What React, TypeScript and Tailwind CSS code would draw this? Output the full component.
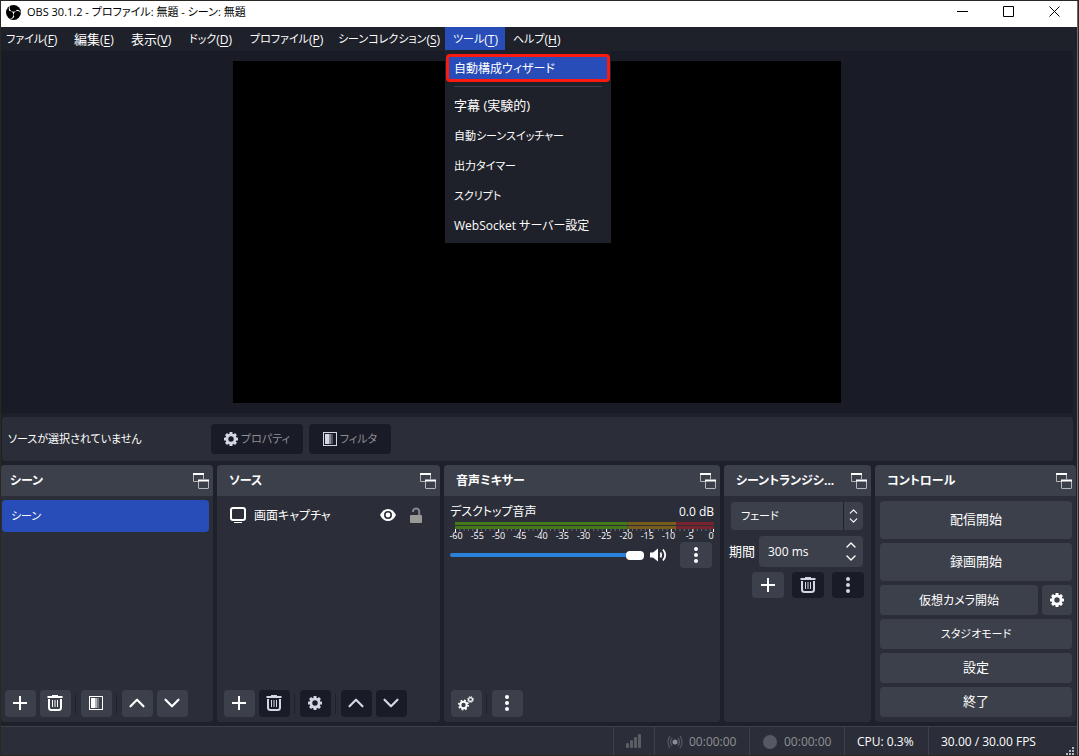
import { ReactNode, useState } from 'react';
import { ChevronDown, ChevronUp } from 'lucide-react';
import { SiObsstudio } from 'react-icons/si';

const MENUS = [
  { label: 'ファイル', accessKey: 'F', width: 'w-[65px]', size: 'text-[11px]' },
  { label: '編集', accessKey: 'E', width: 'w-[57px]', size: 'text-[13px]' },
  { label: '表示', accessKey: 'V', width: 'w-[58px]', size: 'text-[13px]' },
  { label: 'ドック', accessKey: 'D', width: 'w-[61px]', size: 'text-[11px]' },
  { label: 'プロファイル', accessKey: 'P', width: 'w-[88px]', size: 'text-[11px]' },
  { label: 'シーンコレクション', accessKey: 'S', width: 'w-[115px]', size: 'text-[11px]' },
  { label: 'ツール', accessKey: 'T', width: 'w-[60px]', size: 'text-[11px]' },
  { label: 'ヘルプ', accessKey: 'H', width: 'w-[66px]', size: 'text-[11px]' },
];

const TOOL_ITEMS = [
  { label: '字幕 (実験的)', size: 'text-[13px]' },
  { label: '自動シーンスイッチャー', size: 'text-[11px]' },
  { label: '出力タイマー', size: 'text-[11px]' },
  { label: 'スクリプト', size: 'text-[11px]' },
  { label: 'WebSocket サーバー設定', size: 'text-[12px]' },
];

const METER_LABELS = [-60, -55, -50, -45, -40, -35, -30, -25, -20, -15, -10, -5, 0];

/* ---------- icons ---------- */

const ObsLogo = () => (
  <span className="flex size-[15px] shrink-0 items-center justify-center overflow-hidden rounded-full bg-black text-white">
    <SiObsstudio size={19} className="shrink-0" aria-hidden="true" />
  </span>
);

const GearIcon = ({ size = 14, className = '' }: { size?: number; className?: string }) => (
  <svg width={size} height={size} viewBox="0 0 14 14" className={className} aria-hidden="true">
    <circle cx="7" cy="7" r="4.100" fill="none" stroke="currentColor" strokeWidth="2.800" />
    {[0, 45, 90, 135, 180, 225, 270, 315].map((deg) => (
      <rect key={deg} x="5.500" y="0" width="3" height="3" rx="0.500" fill="currentColor" transform={`rotate(${deg} 7 7)`} />
    ))}
  </svg>
);

const GearsIcon = () => (
  <svg width="16" height="15" viewBox="0 0 16 15" aria-hidden="true">
    <g fill="none" stroke="currentColor">
      <circle cx="5.500" cy="9" r="3.200" strokeWidth="2" />
      <circle cx="5.500" cy="9" r="4.700" strokeWidth="1.600" strokeDasharray="1.850 1.840" />
      <circle cx="12.500" cy="3.500" r="1.900" strokeWidth="1.200" />
      <circle cx="12.500" cy="3.500" r="2.900" strokeWidth="1" strokeDasharray="1.140 1.140" />
    </g>
  </svg>
);

const PlusIcon = () => (
  <svg width="14" height="14" viewBox="0 0 14 14" aria-hidden="true">
    <path d="M7 0V14M0 7H14" stroke="#fff" strokeWidth="2" />
  </svg>
);

const TrashIcon = () => (
  <svg width="16" height="16" viewBox="0 0 16 16" fill="none" stroke="currentColor" aria-hidden="true">
    <path d="M0.500 2H15.500" strokeWidth="2" />
    <path d="M5 0.500H11" strokeWidth="1" />
    <path d="M2 4V12.500Q2 15 4.500 15H11.500Q14 15 14 12.500V4" strokeWidth="2" />
    <path d="M5.500 5V12M8 5V12M10.500 5V12" strokeWidth="1" />
  </svg>
);

const FilterIcon = () => (
  <svg width="14" height="14" viewBox="0 0 14 14" aria-hidden="true">
    <rect x="0.500" y="0.500" width="13" height="13" fill="none" stroke="currentColor" />
    <rect x="2" y="2" width="4" height="10" fill="currentColor" />
    <rect x="6" y="2" width="2" height="10" fill="currentColor" opacity="0.600" />
    <rect x="8" y="2" width="2" height="10" fill="currentColor" opacity="0.300" />
  </svg>
);

const DotsIcon = () => (
  <svg width="4" height="16" viewBox="0 0 4 16" fill="currentColor" aria-hidden="true">
    <circle cx="2" cy="2" r="2" />
    <circle cx="2" cy="8" r="2" />
    <circle cx="2" cy="14" r="2" />
  </svg>
);

const PopoutIcon = () => (
  <svg width="16" height="16" viewBox="0 0 16 16" fill="none" aria-hidden="true">
    <path d="M5 8.500H0.500V1H10.500V6" stroke="#b4b6bc" />
    <path d="M0 1H11" stroke="#fff" strokeWidth="2" />
    <rect x="5.500" y="7.500" width="10" height="8" rx="0.500" stroke="#b4b6bc" />
    <path d="M5 7.500H16" stroke="#fff" strokeWidth="2" />
  </svg>
);

const MonitorIcon = () => (
  <svg width="16" height="16" viewBox="0 0 16 16" fill="none" stroke="#fff" aria-hidden="true">
    <rect x="1" y="1" width="14" height="12" rx="2" strokeWidth="2" />
    <path d="M4 15.500H12" strokeWidth="1" />
  </svg>
);

const EyeIcon = () => (
  <svg width="16" height="12" viewBox="0 0 16 12" aria-hidden="true">
    <path d="M0 6Q3 0 8 0T16 6Q13 12 8 12T0 6Z" fill="#fff" />
    <circle cx="8" cy="6" r="3.200" fill="none" stroke="#2b2e38" strokeWidth="1.600" />
  </svg>
);

const UnlockIcon = () => (
  <svg width="12" height="16" viewBox="0 0 12 16" aria-hidden="true">
    <rect y="8" width="12" height="8" rx="1" fill="#9a9995" />
    <path d="M3 5V4A3.200 3.200 0 0 1 9.200 4V8" fill="none" stroke="#85858a" strokeWidth="2" />
  </svg>
);

const SpeakerIcon = () => (
  <svg width="18" height="14" viewBox="0 0 18 14" fill="none" stroke="#fff" aria-hidden="true">
    <path d="M0 4.500H3L8 0.500V13.500L3 9.500H0Z" fill="#fff" stroke="none" />
    <path d="M10.500 4.500Q12 7 10.500 9.500" strokeWidth="1.800" />
    <path d="M13 1.500Q17.500 7 13 12.500" strokeWidth="1.800" />
  </svg>
);

/* ---------- small parts ---------- */

interface ToolButtonProps {
  label: string;
  dark?: boolean;
  wide?: boolean;
  children: ReactNode;
}

const ToolButton = ({ label, dark, wide, children }: ToolButtonProps) => (
  <button
    type="button"
    aria-label={label}
    className={`flex items-center justify-center rounded ${wide ? 'h-[26px] w-8' : 'h-[27px] w-[31px] pr-px pb-px'} ${
      dark ? 'bg-[#191b26] text-[#d3d6e4]' : 'bg-[#3c404b] text-white'
    }`}
  >
    {children}
  </button>
);

const Divider = () => <span className="mr-px h-5 w-px bg-[#1f212a]" />;

const Toolbar = ({ children }: { children: ReactNode }) => (
  <div className="mt-auto flex items-center gap-1 pb-[5px]">{children}</div>
);

interface DockProps {
  title: string;
  flush?: boolean;
  children: ReactNode;
}

const Dock = ({ title, flush, children }: DockProps) => (
  <section className="flex min-w-0 flex-col overflow-hidden rounded bg-[#2b2e38]">
    <header className={`flex h-[31px] shrink-0 items-center justify-between bg-[#3c404b] pr-1 ${flush ? 'pl-[9px]' : 'pl-3'}`}>
      <h2 className="pt-px text-[12px] font-bold whitespace-nowrap">{title}</h2>
      <button type="button" aria-label={`${title} 切り離し`} className="shrink-0">
        <PopoutIcon />
      </button>
    </header>
    {children}
  </section>
);

/* ---------- window sections ---------- */

const TitleBar = () => (
  <header className="flex h-[26px] shrink-0 items-center bg-white pl-[5px] text-[11px] text-black">
    <div className="pb-1"><ObsLogo /></div>
    <h1 className="ml-[6px] flex-1 pb-[3px]">OBS 30.1.2 - プロファイル: 無題 - シーン: 無題</h1>
    <div className="flex h-full pb-[5px]">
      <button type="button" aria-label="最小化" className="flex w-[46px] items-center justify-center">
        <svg width="11" height="11" viewBox="0 0 11 11"><path d="M0 5.500H11" stroke="#000" /></svg>
      </button>
      <button type="button" aria-label="最大化" className="flex w-[46px] items-center justify-center">
        <svg width="11" height="11" viewBox="0 0 11 11"><path d="M.5.500H10.500V10.500H.5Z" fill="none" stroke="#000" /></svg>
      </button>
      <button type="button" aria-label="閉じる" className="flex w-[46px] items-center justify-center">
        <svg width="11" height="11" viewBox="0 0 11 11"><path d="M.5.500L10.500 10.500M10.500.500L.5 10.500" stroke="#000" /></svg>
      </button>
    </div>
  </header>
);

const ToolsMenu = () => (
  <div className="absolute top-6 left-0 z-10 w-[166px] bg-[#1f212a] px-px pt-[3px] pb-[3px]">
    <button
      type="button"
      className="flex h-7 w-full items-center rounded border-3 border-[#fb1a10] bg-[#284cb8] pt-px pl-[5px] text-[12px]"
    >
      自動構成ウィザード
    </button>
    <hr className="mx-2 mt-1 mb-[3px] border-[#3c404b]" />
    {TOOL_ITEMS.map(({ label, size }) => (
      <button key={label} type="button" className={`flex h-[30px] w-full items-center pt-[2px] pl-2 whitespace-nowrap ${size}`}>
        {label}
      </button>
    ))}
  </div>
);

const MenuBar = () => (
  <nav className="flex h-6 shrink-0">
    {MENUS.map(({ label, accessKey, width, size }, i) => (
      <div key={label} className={`relative ${width}`}>
        <button
          type="button"
          className={`flex h-[23px] w-full items-center pt-[2px] text-[12px] whitespace-nowrap ${i === 0 ? 'pl-[5px]' : 'pl-2'} ${
            accessKey === 'T' ? 'bg-[#284cb8]' : ''
          }`}
        >
          <span className={size}>{label}</span>
          <span>(<u className="underline-offset-2">{accessKey}</u>)</span>
        </button>
        {accessKey === 'T' && <ToolsMenu />}
      </div>
    ))}
  </nav>
);

const ContextBar = () => (
  <div className="mt-1 mr-1 ml-px flex h-11 shrink-0 items-center rounded bg-[#2b2e38] pl-[6px] text-[11px]">
    <span className="w-[203px] pt-px">ソースが選択されていません</span>
    <button type="button" className="flex h-[30px] w-[92px] items-center justify-center gap-[3px] rounded bg-[#191b26] text-[#8f8f93]">
      <GearIcon className="text-[#d3d6e4]" />
      プロパティ
    </button>
    <button type="button" className="ml-[6px] flex h-[30px] w-[82px] items-center justify-center gap-[3px] rounded bg-[#191b26] text-[#8f8f93]">
      <span className="text-[#d3d6e4]"><FilterIcon /></span>
      フィルタ
    </button>
  </div>
);

const ScenesDock = () => (
  <Dock title="シーン" flush>
    <button type="button" className="mt-1 mr-1 ml-px flex h-8 items-center rounded bg-[#284cb8] pt-px pl-[9px] text-[11px]">
      シーン
    </button>
    <div className="mt-auto pl-1">
      <Toolbar>
        <ToolButton label="シーンを追加"><PlusIcon /></ToolButton>
        <ToolButton label="シーンを削除"><TrashIcon /></ToolButton>
        <Divider />
        <ToolButton label="シーンフィルタ"><FilterIcon /></ToolButton>
        <Divider />
        <ToolButton label="上へ移動"><ChevronUp size={26} /></ToolButton>
        <ToolButton label="下へ移動"><ChevronDown size={26} /></ToolButton>
      </Toolbar>
    </div>
  </Dock>
);

const SourcesDock = () => (
  <Dock title="ソース">
    <div className="mt-[3px] flex h-8 items-center pr-[18px] pl-[13px] text-[12px]">
      <MonitorIcon />
      <span className="ml-2 flex-1 truncate pt-px">画面キャプチャ</span>
      <button type="button" aria-label="表示" className="mr-[14px]"><EyeIcon /></button>
      <button type="button" aria-label="ロック"><UnlockIcon /></button>
    </div>
    <div className="mt-auto pl-[7px]">
      <Toolbar>
        <ToolButton label="ソースを追加"><PlusIcon /></ToolButton>
        <ToolButton label="ソースを削除" dark><TrashIcon /></ToolButton>
        <Divider />
        <ToolButton label="ソースのプロパティ" dark><GearIcon /></ToolButton>
        <Divider />
        <ToolButton label="上へ移動" dark><ChevronUp size={26} /></ToolButton>
        <ToolButton label="下へ移動" dark><ChevronDown size={26} /></ToolButton>
      </Toolbar>
    </div>
  </Dock>
);

const LevelMeter = () => (
  <svg className="block h-[10px] w-full" viewBox="0 0 60 10" preserveAspectRatio="none" aria-hidden="true">
    {[0, 4].map((y) => (
      <g key={y}>
        <rect x="0" y={y} width="40" height="3" fill="#447818" />
        <rect x="40" y={y} width="11.200" height="3" fill="#785c1c" />
        <rect x="51.200" y={y} width="8.800" height="3" fill="#78242f" />
      </g>
    ))}
    {Array.from({ length: 61 }, (_, db) => (
      <rect
        key={db}
        x={db === 60 ? 59.77 : db}
        y="7"
        width="0.230"
        height={db % 5 === 0 ? 3 : 2}
        fill={db % 5 === 0 ? '#fff' : '#6d6f78'}
      />
    ))}
  </svg>
);

const MixerDock = () => {
  const [volume, setVolume] = useState(100);

  return (
    <Dock title="音声ミキサー">
      <div className="mt-[6px] flex h-5 items-center justify-between px-[6px] text-[12px]">
        <label htmlFor="desktop-volume">デスクトップ音声</label>
        <span>0.0 dB</span>
      </div>
      <div className="pr-[6px] pl-[11px]">
        <LevelMeter />
      </div>
      <div className="mr-px ml-1 flex h-2 items-center justify-between font-['Open_Sans'] text-[9px]">
        {METER_LABELS.map((db) => (
          <span key={db} className="w-4 text-center whitespace-nowrap">{db}</span>
        ))}
      </div>
      <div className="mt-[2px] flex items-center pr-2 pl-[6px]">
        <input
          id="desktop-volume"
          type="range"
          min={0}
          max={100}
          value={volume}
          onChange={(e) => setVolume(Number(e.target.value))}
          className="h-1 min-w-0 flex-1 appearance-none rounded-full bg-[#2a82da] [&::-webkit-slider-thumb]:h-[9px] [&::-webkit-slider-thumb]:w-[18px] [&::-webkit-slider-thumb]:appearance-none [&::-webkit-slider-thumb]:rounded-sm [&::-webkit-slider-thumb]:bg-white"
        />
        <button type="button" aria-label="ミュート" className="mr-3 ml-[6px]"><SpeakerIcon /></button>
        <ToolButton label="デスクトップ音声のメニュー" wide><DotsIcon /></ToolButton>
      </div>
      <div className="mt-auto pl-[7px]">
        <Toolbar>
          <ToolButton label="オーディオの詳細プロパティ"><GearsIcon /></ToolButton>
          <Divider />
          <ToolButton label="ミキサーメニュー"><DotsIcon /></ToolButton>
        </Toolbar>
      </div>
    </Dock>
  );
};

const TransitionsDock = () => {
  const [duration, setDuration] = useState('300 ms');

  return (
    <Dock title="シーントランジシ...">
      <div className="mt-[6px] mr-2 ml-[7px] flex h-7 rounded bg-[#3c404b] text-[11px]">
        <select aria-label="トランジション" className="min-w-0 flex-1 appearance-none pt-px pl-[10px] outline-none">
          <option>フェード</option>
        </select>
        <span className="pointer-events-none flex w-5 flex-col items-center justify-center border-l border-[#1f212a]">
          <span className="flex h-[9px] items-center"><ChevronUp size={13} /></span>
          <span className="flex h-[9px] items-center"><ChevronDown size={13} /></span>
        </span>
      </div>
      <div className="mt-[6px] mr-2 ml-[5px] flex items-center text-[12px]">
        <label htmlFor="duration" className="w-[30px] shrink-0 text-[13px]">期間</label>
        <div className="flex h-[31px] min-w-0 flex-1 rounded bg-[#3c404b]">
          <input
            id="duration"
            value={duration}
            onChange={(e) => setDuration(e.target.value)}
            className="min-w-0 flex-1 pl-[9px] outline-none"
          />
          <div className="flex w-6 flex-col items-center justify-center">
            <button type="button" aria-label="増やす" className="flex h-[13px] items-center"><ChevronUp size={16} /></button>
            <button type="button" aria-label="減らす" className="flex h-[13px] items-center"><ChevronDown size={16} /></button>
          </div>
        </div>
      </div>
      <div className="mt-[5px] mr-[7px] flex justify-end gap-2">
        <ToolButton label="トランジションを追加" wide><PlusIcon /></ToolButton>
        <ToolButton label="トランジションを削除" dark wide><TrashIcon /></ToolButton>
        <ToolButton label="トランジションのメニュー" dark wide><DotsIcon /></ToolButton>
      </div>
    </Dock>
  );
};

const ControlsDock = () => (
  <Dock title="コントロール">
    <div className="flex flex-col gap-1 pt-[5px] pr-1 pl-[5px] text-[13px]">
      <button type="button" className="h-[38px] rounded bg-[#3c404b]">配信開始</button>
      <button type="button" className="h-[38px] rounded bg-[#3c404b]">録画開始</button>
      <div className="flex gap-1">
        <button type="button" className="h-[30px] flex-1 rounded bg-[#3c404b] pt-px text-[12px]">仮想カメラ開始</button>
        <button type="button" aria-label="仮想カメラの設定" className="flex h-[30px] w-[30px] items-center justify-center rounded bg-[#3c404b]">
          <GearIcon />
        </button>
      </div>
      <button type="button" className="h-[30px] rounded bg-[#3c404b] pt-px text-[11px]">スタジオモード</button>
      <button type="button" className="h-[30px] rounded bg-[#3c404b]">設定</button>
      <button type="button" className="h-[30px] rounded bg-[#3c404b]">終了</button>
    </div>
  </Dock>
);

const StatusBar = () => (
  <footer className="mt-1 flex h-[29px] shrink-0 justify-end border-t border-[#3c404b] bg-[#2b2e38] text-[12px]">
    <div className="flex w-[41px] items-center justify-center border-l border-[#3c404b]">
      <svg width="16" height="14" viewBox="0 0 16 14" fill="#5b5d65" aria-hidden="true">
        <rect x="0" y="9" width="3" height="5" rx="1" />
        <rect x="4" y="6" width="3" height="8" rx="1" />
        <rect x="8" y="3" width="3" height="11" rx="1" />
        <rect x="12" y="0" width="3" height="14" rx="1" />
      </svg>
    </div>
    <div className="flex w-[95px] items-center gap-[6px] border-l border-[#3c404b] pt-px pl-3 text-[#8f9094]">
      <svg width="16" height="14" viewBox="0 0 16 14" fill="none" stroke="#555760" aria-hidden="true">
        <circle cx="8" cy="7" r="2.500" fill="#8b8d93" stroke="none" />
        <path d="M5 3.200Q2.200 7 5 10.800M11 3.200Q13.800 7 11 10.800" strokeWidth="1.400" />
        <path d="M3 .8Q-1 7 3 13.200M13 .8Q17 7 13 13.200" strokeWidth="1.200" />
      </svg>
      00:00:00
    </div>
    <div className="flex w-[95px] items-center gap-[7px] border-l border-[#3c404b] pt-px pl-[13px] text-[#8f9094]">
      <span className="size-[14px] rounded-full bg-[#575962]" />
      00:00:00
    </div>
    <div className="flex w-[84px] items-center border-l border-[#3c404b] pt-px pl-3">CPU: 0.3%</div>
    <div className="flex w-[149px] items-center justify-between border-l border-[#3c404b] pt-px pr-[3px] pl-3">
      30.00 / 30.00 FPS
      <svg width="8" height="8" viewBox="0 0 8 8" fill="#b5b6ba" className="self-end" aria-hidden="true">
        <path d="M6 0h2v2h-2zM3 3h2v2h-2zM6 3h2v2h-2zM0 6h2v2h-2zM3 6h2v2h-2zM6 6h2v2h-2z" />
      </svg>
    </div>
  </footer>
);

export default function App() {
  return (
    <div className="flex h-screen min-h-[640px] flex-col border border-[#2a2823] bg-[#1f212a] font-['Open_Sans','Noto_Sans_CJK_JP',sans-serif] text-white [font-feature-settings:'palt']">
      <div className="flex min-h-0 flex-1 flex-col border-r border-[#6b6b6b]">
        <TitleBar />
        <MenuBar />
        <main className="mr-1 min-h-0 flex-1 bg-[#191b26] py-[10px]">
          <div className="mx-auto aspect-video h-full bg-black" />
        </main>
        <ContextBar />
        <div className="mt-1 grid h-[257px] shrink-0 grid-cols-[212fr_223fr_276fr_147fr_201fr] gap-1 pr-px">
          <ScenesDock />
          <SourcesDock />
          <MixerDock />
          <TransitionsDock />
          <ControlsDock />
        </div>
        <StatusBar />
      </div>
    </div>
  );
}
